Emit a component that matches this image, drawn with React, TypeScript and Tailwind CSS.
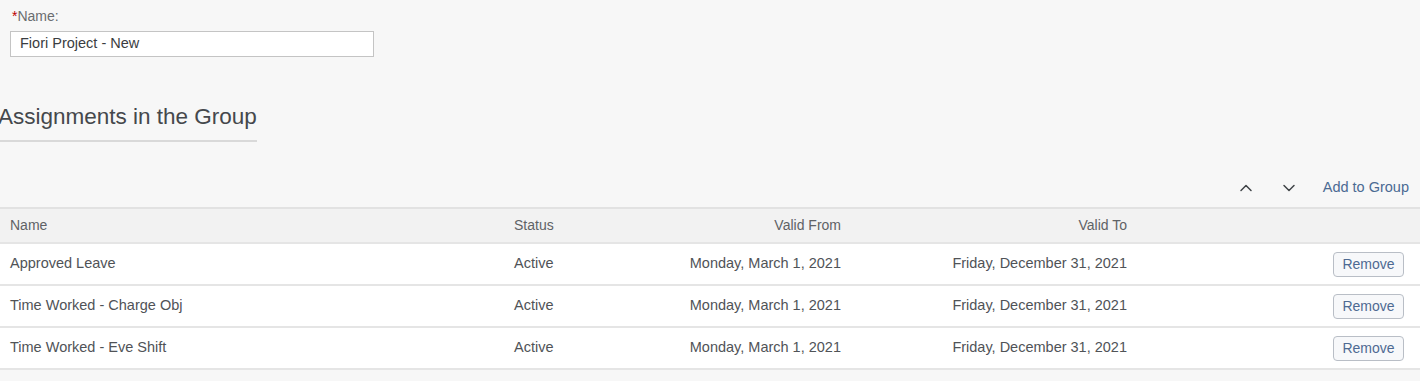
import { ChevronUp, ChevronDown } from "lucide-react";

const ROWS = [
  { name: "Approved Leave", status: "Active", from: "Monday, March 1, 2021", to: "Friday, December 31, 2021" },
  { name: "Time Worked - Charge Obj", status: "Active", from: "Monday, March 1, 2021", to: "Friday, December 31, 2021" },
  { name: "Time Worked - Eve Shift", status: "Active", from: "Monday, March 1, 2021", to: "Friday, December 31, 2021" },
];

const COLS = "grid grid-cols-[504px_160px_167px_286px_1fr] items-center pl-[10px] pr-[16px]";

export default function App() {
  return (
    <div
      className="w-full h-[381px] overflow-hidden bg-[#f7f7f7] text-[#32363a]"
      style={{ fontFamily: '"Liberation Sans", Arial, sans-serif' }}
    >
      {/* Name field */}
      <div className="pl-[10px] pt-[7px]">
        <label className="block pl-[2px] text-[14px] leading-[18px] text-[#6a6d70]">
          <span className="text-[#bb0000]">*</span>Name:
        </label>
        <div className="mt-[6px] w-[364px] h-[26px] border border-[#c4c4c4] bg-white flex items-center px-[9px] text-[14.5px] text-[#3a3d41]">
          Fiori Project - New
        </div>
      </div>

      {/* Section title */}
      <div className="mt-[46px] w-[257px]">
        <h2 className="-ml-[2px] text-[22.5px] leading-[28px] text-[#45484c] whitespace-nowrap">Assignments in the Group</h2>
        <div className="mt-[9px] h-[2px] bg-[#d9d9d9]" />
      </div>

      {/* Toolbar */}
      <div className="mt-[28px] h-[36px] flex items-center justify-end pr-[11px]">
        <button className="w-[40px] h-[28px] flex items-center justify-center text-[#3f4347]">
          <ChevronUp size={20} strokeWidth={1.8} />
        </button>
        <button className="w-[40px] h-[28px] flex items-center justify-center text-[#3f4347] ml-[3px]">
          <ChevronDown size={20} strokeWidth={1.8} />
        </button>
        <button className="ml-[14px] text-[14.5px] text-[#4b6a93]">Add to Group</button>
      </div>

      {/* Table */}
      <div className="mt-[1px] border-t-2 border-[#e2e2e2]">
        <div className={`${COLS} h-[35px] bg-[#f2f2f2] text-[14px] text-[#5f6266] border-b-2 border-[#e5e5e5]`}>
          <div>Name</div>
          <div>Status</div>
          <div className="text-right">Valid From</div>
          <div className="text-right">Valid To</div>
          <div />
        </div>
        {ROWS.map((r) => (
          <div
            key={r.name}
            className={`${COLS} h-[42px] bg-white text-[14.5px] text-[#505357] border-b-2 border-[#e5e5e5]`}
          >
            <div>{r.name}</div>
            <div>{r.status}</div>
            <div className="text-right">{r.from}</div>
            <div className="text-right">{r.to}</div>
            <div className="flex justify-end">
              <button className="w-[71px] h-[25px] rounded-[4px] border border-[#b9bec6] bg-[#f7f8fa] text-[14px] text-[#4e6a92]">
                Remove
              </button>
            </div>
          </div>
        ))}
      </div>
    </div>
  );
}
